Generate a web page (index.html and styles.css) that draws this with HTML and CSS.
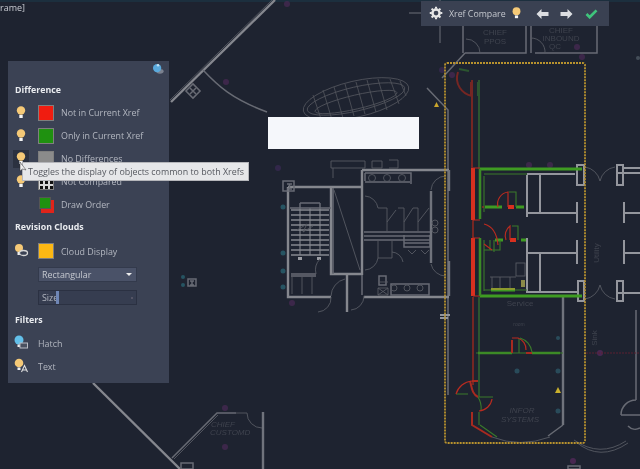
FILE: index.html
```html
<!DOCTYPE html>
<html lang="en">
<head>
<meta charset="utf-8">
<title>Xref Compare</title>
<link rel="stylesheet" href="styles.css">
</head>
<body>
<svg class="defs" width="0" height="0" aria-hidden="true">
  <symbol id="bulb" viewBox="0 0 16 18">
    <circle cx="8" cy="6.500" r="4.200" fill="#f5c977"/>
    <rect x="6.300" y="11" width="3.400" height="3" fill="#f4f4f4"/>
  </symbol>
</svg>
<main class="stage">
  <svg class="drawing" viewBox="0 0 640 469" width="640" height="469" aria-hidden="true">
    <rect x="0" y="0" width="640" height="2" fill="#1c2f3e"/>

    <!-- faint markers -->
    <g class="dots">
      <circle cx="226" cy="82" r="3" fill="#4a2a55"/><circle cx="287" cy="4" r="3" fill="#4a2a55"/>
      <circle cx="278" cy="168" r="3" fill="#3b2a55"/><circle cx="292" cy="303" r="3" fill="#4a2a55"/>
      <circle cx="577" cy="47" r="3" fill="#4a2a55"/><circle cx="582" cy="57" r="3" fill="#4a2a55"/>
      <circle cx="442" cy="70" r="3" fill="#3b2a55"/><circle cx="452" cy="75" r="3" fill="#4a2a55"/>
      <circle cx="529" cy="165" r="3" fill="#4a2a55"/><circle cx="550" cy="165" r="3" fill="#4a2a55"/>
      <circle cx="600" cy="353" r="3" fill="#5a2a60"/><circle cx="573" cy="461" r="3" fill="#5a2a60"/>
      <circle cx="225" cy="447" r="3" fill="#4a2a55"/><circle cx="225" cy="408" r="3" fill="#4a2a55"/>
      <circle cx="517" cy="371" r="2.500" fill="#2f5d6d"/><circle cx="558" cy="371" r="2.500" fill="#2f5d6d"/>
      <circle cx="558" cy="411" r="2.500" fill="#2f5d6d"/><circle cx="558" cy="338" r="2" fill="#2f5d6d"/>
      <circle cx="283" cy="207" r="2.500" fill="#2a6a78"/><circle cx="283" cy="253" r="2.500" fill="#2a6a78"/>
      <circle cx="283" cy="271" r="2.500" fill="#2a6a78"/><circle cx="283" cy="287" r="2.500" fill="#2a6a78"/>
      <circle cx="183" cy="277" r="2" fill="#2a6a78"/><circle cx="183" cy="285" r="2" fill="#2a6a78"/>
      <circle cx="638" cy="58" r="2" fill="#55606a"/>
    </g>

    <!-- top-left curtain wall -->
    <path class="wall-thick wall-bright" d="M171 102 L275 0"/>
    <path class="wall-thin" d="M170 100 L272 0"/>
    <path class="wall" d="M203 70 C218 86 232 99 267 112"/>
    <rect class="wall" x="188" y="86" width="10" height="10" transform="rotate(-45 193 91)"/>
    <path class="wall" d="M190 88 l6 6 M196 88 l-6 6"/>

    <!-- mesh ellipse -->
    <g class="mesh">
      <ellipse cx="356" cy="99" rx="54" ry="18" transform="rotate(-13 356 99)"/>
      <ellipse cx="356" cy="102" rx="42" ry="7" transform="rotate(-13 356 102)"/>
      <ellipse cx="356" cy="99" rx="50" ry="12" transform="rotate(-13 356 99)"/>
      <path d="M313 95 L322 122 M323 90 L332 120 M334 87 L343 118 M345 84 L354 116 M356 82 L365 114 M367 80 L376 112 M378 79 L387 110 M390 79 L399 104 M400 81 L406 96"/>
    </g>

    <!-- bottom-left curtain wall -->
    <path class="wall-thick wall-bright" d="M93 383 L180 469"/>
    <path class="wall" d="M172 458 L217 413 L236 413"/>
    <path class="wall-thin" d="M174 459 L218 415 M236 413 L247 413"/>
    <path class="wall-thin" d="M247 413 A 15 15 0 0 0 262 428"/>
    <path class="wall-thick" d="M263 412 V469"/>
    <rect class="wall" x="181" y="463" width="12" height="6"/>

    <text class="label ital" x="211" y="427">CHIEF</text>
    <text class="label ital" x="210" y="435">CUSTOMD</text>

    <!-- top rooms -->
    <path class="wall" d="M463 26 V53 M465 53 L526 53 V26 M531 26 V53 M535 53 H597 V26"/>
    <path class="wall-thin" d="M466 39 A 14 14 0 0 1 480 53 M531 38 A 14 14 0 0 1 545 53"/>
    <path class="wall" d="M442 78 L465 53 M427 88 L448 110 V395"/>
    <text class="label" x="495" y="35" text-anchor="middle">CHIEF</text>
    <text class="label" x="495" y="44" text-anchor="middle">PPOS</text>
    <text class="label" x="561" y="33" text-anchor="middle">CHIEF</text>
    <text class="label" x="561" y="41" text-anchor="middle">INBOUND</text>
    <text class="label" x="555" y="49" text-anchor="middle">QC</text>
    <path d="M434 107 l2.500 -5 l2.500 5 z" fill="#c9a52c"/>

    <!-- core -->
    <g class="core">
      <path class="wall-thick wall-bright" d="M288 187 V297 H331 M288 187 H362 M331 188 V274 H362 M362 170 V275 M362 170 H449"/>
      <path class="wall" d="M333 188 V274"/>
      <path class="wall-thin" d="M334 190 L360 270"/>
      <rect class="wall" x="283" y="181" width="11" height="10"/>
      <path class="wall" d="M287 184 h5 M289.500 184 v5 M287 189 h5"/>
      <path class="wall-thin" d="M331 161 H365 V168 H331 Z M333 168 V178 M372 161 H382 V168 H372 Z M389 160 H398 V168 H389"/>
      <path class="wall" d="M290 208 H331 M300 203 H320 M300 203 V255 M310 208 V255 M320 203 V255"/>
      <path class="tread" d="M291 210 H329 M291 215 H329 M291 220 H329 M291 225 H329 M291 230 H329 M291 235 H329 M291 240 H329 M291 245 H329 M291 250 H329 M291 255 H329"/>
      <path class="wall-thin" d="M297 230 L307 224 L303 232 L313 226"/>
      <rect class="fill" x="298" y="257" width="4" height="3"/><rect class="fill" x="317" y="257" width="4" height="3"/>
      <path class="wall" d="M291 274 H316 M291 276 H316"/>
      <path class="wall-thin" d="M316 274 A 16 16 0 0 1 320 259"/>
      <path class="wall-thin" d="M292 276 V294 M302 277 V294 M312 277 V294"/>
      <!-- toilets -->
      <path class="wall" d="M365 173 H411 V184 M365 182 H410 M365 173 V181"/>
      <circle class="wall-thin" cx="372" cy="178" r="3.500"/><circle class="wall-thin" cx="387" cy="178" r="3.500"/><circle class="wall-thin" cx="402" cy="178" r="3.500"/>
      <path class="wall" d="M364 232 H430"/>
      <path class="wall" d="M364 236 H430 M364 240 H430"/>
      <path class="wall-thin" d="M365 196 A 14 14 0 0 1 378 208 H387 V232 M387 222 L396 210 M398 208 H404 V232 M404 222 L413 208 H418 V232 M418 222 L429 208"/>
      <path class="wall-thin" d="M378 240 V258 H392 V240 M392 252 A 12 12 0 0 1 403 262 M365 270 A 14 14 0 0 0 378 258"/>
      <path class="wall" d="M404 235 V247 H430 V235 M404 243 H430"/>
      <path class="wall-thin" d="M408 250 l4 4 l4 -4 M421 250 l4 4 l4 -4"/>
      <path class="wall-thick" d="M431 191 V263"/>
      <path class="wall-thick" d="M449 170 V191 M449 261 V296"/>
      <path class="wall-thin" d="M431 190 A 15 15 0 0 1 446 176 M431 264 A 15 15 0 0 0 446 276"/>
      <circle class="wall-thin" cx="435" cy="223" r="3"/><circle class="wall-thin" cx="435" cy="230" r="3"/>
      <path class="wall" d="M362 275 V295"/>
      <path class="wall-thick wall-bright" d="M347 275 V312 M364 297 H449"/>
      <rect class="wall" x="379" y="276" width="7" height="9"/>
      <path class="wall-thin" d="M378 282 H388 M378 288 H388 V295 H378 Z M378 288 L388 295 M388 288 L378 295"/>
      <path class="wall" d="M391 284 H429 V295 H391 Z"/>
      <circle class="wall-thin" cx="394" cy="288" r="3"/><circle class="wall-thin" cx="407" cy="288" r="3"/><circle class="wall-thin" cx="420" cy="288" r="3"/>
      <path class="wall-thin" d="M345 279 A 18 18 0 0 0 331 296 M351 310 A 14 14 0 0 0 364 296 M331 297 A 14 14 0 0 1 318 312"/>
    </g>

    <!-- dim xref lines -->
    <path class="red-dim" d="M472 80 V168 M473 220 V238 M473 297 V385"/>
    <path class="green-dim" d="M479 80 V169 M479 297 V397"/>
    <path class="red-dim" d="M458 72 C454 84 462 94 472 96 M471 82 V96"/>
    <path class="green-dim" d="M459 69 L469 71 M478 82 V96"/>

    <!-- right wing -->
    <path class="wall-white" d="M527 238 V293 M527 253 H577 M577 240 V264 M540 253 V292 M527 292 H577"/>
    <path class="wall-white" d="M527 175 V217 M527 174 H575 M540 174 V214 M527 213 H577 M577 202 V223"/>
    <path class="wall-white" d="M577 165 H584 V185 H577 Z M578 281 H584 V301 H578 Z"/>
    <path class="wall-thin" d="M585 167 A 18 18 0 0 1 600 181 A 18 18 0 0 1 615 167 M585 299 A 18 18 0 0 0 600 285 A 18 18 0 0 0 615 299"/>

    <path class="wall-white" d="M623 165 H617 V185 H623 Z M623 281 H617 V301 H623 Z"/>
    <path class="wall-white" d="M622 168 H640 M618 173 H640 M624 202 V223 M624 213 H640 M624 240 V264 M624 253 H640 M618 293 H640"/>

    <path class="wall-thick" d="M563 297 V425"/>
    <!-- green / red revisions -->
    <path class="red" d="M473 168 V220 M473 238 V296"/>
    <path class="red-thin" d="M473 168 H480 M473 220 H480 M473 238 H480 M473 296 H480"/>
    <path class="green" d="M480 169 H582 M480 296 H582"/>
    <path class="green-mid" d="M480 169 V219 M480 238 V296"/>
    <path class="green-thin" d="M484 176 V212 M484 240 V291 M484 174 H527 M484 290 H527"/>
    <path class="green" d="M485 207 H502 M516 207 H524 M495 240 H503 M521 240 H526 M491 290 H515"/>
    <path class="red" d="M508 207 H514 M510 240 H516"/>
    <path class="red-thin" d="M498 207 A 12 12 0 0 1 508 192 V207 M506 240 A 12 12 0 0 1 510 226 V240 M484 224 C492 226 497 234 498 245"/>
    <path class="green-thin" d="M516 207 V192 H509 M518 240 V226 H512 M490 240 V250 H500 V240 M484 250 H500 M494 252 V240"/>
    <path class="red-thin" d="M484 244 L492 250 M482 207 H484"/>
    <path class="wall-thin" d="M492 277 V290 M500 277 V290 M510 277 V290 M490 277 H516"/>
    <rect x="491" y="288" width="24" height="2" fill="#8c9a2e"/>
    <rect x="521" y="280" width="4" height="7" fill="#8a8a48"/>
    <rect class="wall-thin" x="516" y="263" width="9" height="13"/>

    <!-- lower room -->
    <path class="green-thin" d="M476 353 H563"/>
    <path class="green-mid" d="M478 353 H512 M532 353 H560"/>
    <path class="red-mid" d="M512 340 V353 M526 353 H532"/>
    <path class="red-thin" d="M512 338 H518 A 12 12 0 0 1 526 350"/>
    <path class="green-thin" d="M519 339 V353 M520 338 A 17 17 0 0 1 532 352"/>
    <path class="green-thin" d="M456 394 H468 M479 397 H493 M478 397 A 20 20 0 0 1 481 410 M479 412 V425"/>
    <path class="red-mid" d="M470 381 C472 388 472 394 478 397 M472 381 H478"/>
    <path class="red-thin" d="M456 394 A 18 18 0 0 1 472 381 M479 411 A 14 14 0 0 0 492 399"/>
    <path class="red-mid" d="M472 412 V425 L492 437"/>
    <path class="green-thin" d="M480 425 L497 437"/>
    <path class="wall-thin" d="M492 437 Q 520 448 550 437"/>
    <path class="wall" d="M548 436 L563 425"/>
    <path class="wall-thin" d="M574 440 Q 600 458 626 441"/>
    <path class="wall-thin" d="M576 442 Q 600 462 628 443"/>
    <path class="wall" d="M636 310 V400 M621 415 A 15 15 0 0 1 636 400 M621 415 H640 M628 426 A 10 10 0 0 0 640 428"/>
    <path class="wall-white" d="M440 315 H450 M440 318 H448"/>
    <rect class="wall" x="568" y="466" width="12" height="3"/>
    <path d="M555 393 l3 -6 l3 6 z" fill="#c9b02c"/>
    <path class="xline" d="M586 353 H640"/>
    <text class="label ital" x="522" y="413" text-anchor="middle">INFOR</text>
    <text class="label ital" x="520" y="422" text-anchor="middle">SYSTEMS</text>
    <text class="label" x="520" y="306" text-anchor="middle">Service</text>
    <text class="label" transform="rotate(-90 599 253)" x="599" y="253" text-anchor="middle">Utility</text>
    <text class="label" transform="rotate(-90 597 338)" x="597" y="338" text-anchor="middle">Sink</text>
    <text class="label-sm" x="519" y="326" text-anchor="middle">room</text>

    <!-- small column by panel -->
    <path class="wall" d="M188 279 H196 V286 H188 Z M190 281 h4 M192 281 v4 M190 285 h4"/>

    <!-- revision cloud -->
    <rect class="cloud" x="445" y="63" width="140" height="380" rx="2"/>

    <!-- crosshair -->
    <path class="cross" d="M409 13 H441 M440 0 V43"/>
  </svg>

  <p class="caption">rame]</p>
  <div class="blank"></div>

  <section class="toolbar">
    <svg class="gear" viewBox="0 0 16 16" width="15" height="15" aria-hidden="true">
      <circle cx="7.500" cy="7.500" r="3.800" fill="none" stroke="#e6e6e6" stroke-width="2.600"/>
      <path d="M7.500 .8 V3 M7.500 12 V14.200 M.8 7.500 H3 M12 7.500 H14.200 M2.800 2.800 L4.300 4.300 M10.700 10.700 L12.200 12.200 M12.200 2.800 L10.700 4.300 M4.300 10.700 L2.800 12.200" stroke="#e6e6e6" stroke-width="2.200"/>
    </svg>
    <span class="toolbar-title">Xref Compare</span>
    <svg class="tool-bulb" aria-hidden="true"><use href="#bulb"/></svg>
    <svg class="tool-arrow" viewBox="0 0 12 10" width="13" height="10" aria-hidden="true"><path d="M0 5 L5 0 V3 H12 V7 H5 V10 Z" fill="#dcdee2"/></svg>
    <svg class="tool-arrow" viewBox="0 0 12 10" width="13" height="10" aria-hidden="true"><path d="M12 5 L7 0 V3 H0 V7 H7 V10 Z" fill="#dcdee2"/></svg>
    <svg class="tool-check" viewBox="0 0 14 11" width="13" height="10" aria-hidden="true"><path d="M1.500 5.500 L5 9 L12.500 1.500" fill="none" stroke="#3fc47c" stroke-width="3"/></svg>
  </section>

  <aside class="panel">
    <svg class="panel-pin" viewBox="0 0 14 14" width="13" height="13" aria-hidden="true">
      <ellipse cx="8.500" cy="9" rx="4" ry="2.500" fill="#7b8290"/>
      <circle cx="5.500" cy="5.500" r="4.500" fill="#5aa9dc"/>
      <circle cx="6.500" cy="2.500" r="1.300" fill="#bfe0f5"/>
    </svg>
    <h2 class="heading heading-first">Difference</h2>

    <div class="row">
      <svg class="row-icon" aria-hidden="true"><use href="#bulb"/></svg>
      <span class="swatch swatch-red"></span><span class="row-label">Not in Current Xref</span>
    </div>
    <div class="row">
      <svg class="row-icon" aria-hidden="true"><use href="#bulb"/></svg>
      <span class="swatch swatch-green"></span><span class="row-label">Only in Current Xref</span>
    </div>
    <div class="row">
      <span class="hover-cell"><svg class="row-icon" aria-hidden="true"><use href="#bulb"/></svg></span>
      <span class="swatch swatch-grey"></span><span class="row-label">No Differences</span>
    </div>
    <div class="row">
      <svg class="row-icon" aria-hidden="true"><use href="#bulb"/></svg>
      <span class="swatch swatch-dots"></span><span class="row-label">Not Compared</span>
    </div>
    <div class="row">
      <span class="row-icon"></span>
      <span class="swatch swatch-order"><i class="order-back"></i><i class="order-front"></i></span><span class="row-label">Draw Order</span>
    </div>

    <h2 class="heading">Revision Clouds</h2>
    <div class="row">
      <svg class="row-icon" viewBox="0 0 16 18" aria-hidden="true">
        <circle cx="6" cy="6" r="4" fill="#f5c977"/><rect x="4.500" y="10" width="3" height="3" fill="#eee"/>
        <ellipse cx="10.500" cy="11" rx="4" ry="2.500" fill="#3b4254" stroke="#d8d8d8" stroke-width="1.300"/>
      </svg>
      <span class="swatch swatch-amber"></span><span class="row-label">Cloud Display</span>
    </div>
    <div class="row row-field">
      <div class="select"><span>Rectangular</span><i class="caret"></i></div>
    </div>
    <div class="row row-field">
      <div class="slider"><span>Size</span><i class="handle"></i><i class="chev"></i></div>
    </div>

    <h2 class="heading">Filters</h2>
    <div class="row">
      <svg class="row-icon" viewBox="0 0 16 18" aria-hidden="true">
        <circle cx="6" cy="6" r="4.500" fill="#63c0ea"/><rect x="4.500" y="10.500" width="3" height="2.500" fill="#eee"/>
        <rect x="7" y="9" width="7.500" height="5" fill="#4a5160" stroke="#b9bcc4"/>
      </svg>
      <span class="row-label row-label-short">Hatch</span>
    </div>
    <div class="row">
      <svg class="row-icon" viewBox="0 0 16 18" aria-hidden="true">
        <circle cx="6" cy="6" r="4.300" fill="#f5c977"/><rect x="4.500" y="10.500" width="3" height="2.500" fill="#eee"/>
        <path d="M8.500 15 L11.500 8.500 L14.500 15 M9.800 13 H13.200" fill="none" stroke="#e0e0e0" stroke-width="1.100"/>
      </svg>
      <span class="row-label row-label-short">Text</span>
    </div>
  </aside>

  <div class="tooltip">Toggles the display of objects common to both Xrefs</div>
  <svg class="cursor" viewBox="0 0 10 12" width="10" height="12" aria-hidden="true"><path d="M1 0 L1 9 L3.500 7 L7 8 Z" fill="#f0f0f0" stroke="#333" stroke-width=".5"/></svg>
</main>
</body>
</html>
```

FILE: styles.css
```css
* { box-sizing: border-box; }
html, body { margin: 0; padding: 0; background: #1e2330; }
body { width: 640px; height: 469px; overflow: hidden; font-family: "Open Sans", "Noto Sans", sans-serif; }

.defs { position: absolute; }
.stage { position: relative; width: 640px; height: 469px; overflow: hidden; background: #1e2330; filter: blur(0.5px); }
.drawing { position: absolute; left: 0; top: 0; display: block; }

.dots { opacity: .7; }
.wall-thick { stroke: #70737c; stroke-width: 2.400; fill: none; }
.wall-bright { stroke: #85878e; }
.wall { stroke: #686b74; stroke-width: 1.500; fill: none; }
.wall-thin { stroke: #575a63; stroke-width: .9; fill: none; }
.wall-white { stroke: #94969d; stroke-width: 2; fill: none; }
.tread { stroke: #85888f; stroke-width: 1.300; fill: none; }
.fill { fill: #9a9ca3; }
.mesh ellipse, .mesh path { stroke: #53555d; stroke-width: .8; fill: none; }
.red { stroke: #d8301f; stroke-width: 4; fill: none; }
.red-mid { stroke: #a82a20; stroke-width: 2; fill: none; }
.red-thin { stroke: #b92b20; stroke-width: 1.200; fill: none; }
.red-dim { stroke: #752623; stroke-width: 2; fill: none; }
.green { stroke: #3f9b22; stroke-width: 3; fill: none; }
.green-mid { stroke: #3c8a26; stroke-width: 2.500; fill: none; }
.green-thin { stroke: #3a7a2b; stroke-width: 1.100; fill: none; }
.green-dim { stroke: #2c552f; stroke-width: 2; fill: none; }
.cloud { stroke: #b8922e; stroke-width: 1.800; stroke-dasharray: 2 1; fill: none; }
.cross { stroke: #6d7079; stroke-width: 1; fill: none; }
.xline { stroke: #5a2030; stroke-width: 1; stroke-dasharray: 2 1; fill: none; }
.label { font-family: "Liberation Sans", sans-serif; font-size: 8px; fill: #3f434e; }
.label-sm { font-family: "Liberation Sans", sans-serif; font-size: 5px; fill: #3f434e; }
.ital { font-style: italic; }

.caption { position: absolute; left: 0; top: 2px; margin: 0; font-size: 9px; line-height: 12px; color: #c8cbd2; }
.blank { position: absolute; left: 268px; top: 117px; width: 151px; height: 32px; background: #f5f7fb; }

.toolbar { position: absolute; left: 421px; top: 1px; width: 188px; height: 25px; background: #3a4152; display: flex; align-items: center; padding-left: 8px; }
.gear { flex: none; }
.toolbar-title { margin-left: 5px; width: 57px; font-size: 8.800px; color: #c4c7ce; white-space: nowrap; }
.tool-bulb { margin-left: 3px; width: 15px; height: 17px; }
.tool-arrow { margin-left: 12px; }
.tool-arrow + .tool-arrow { margin-left: 11px; }
.tool-check { margin-left: 12px; }

.panel { position: absolute; left: 8px; top: 61px; width: 161px; height: 322px; background: #3b4254; padding: 18px 0 0 5px; display: flex; flex-direction: column; }
.panel-pin { position: absolute; left: 144px; top: 2px; }
.heading { margin: 0 0 0 2px; height: 23px; line-height: 23px; font-size: 8.800px; font-weight: 700; color: #e9ebef; flex: none; }
.heading-first { height: 22px; }
.row { height: 23.100px; display: flex; align-items: center; flex: none; }
.row-icon { width: 16px; height: 18px; flex: none; display: block; }
.hover-cell { width: 16px; height: 18px; flex: none; background: #2b3140; display: block; }
.swatch { width: 16px; height: 16px; margin-left: 9px; flex: none; border: 1px solid #7f7f7f; position: relative; display: block; }
.swatch-red { background: #f01c10; }
.swatch-green { background: #1f9110; }
.swatch-grey { background: #8b8b8b; }
.swatch-dots { background: radial-gradient(circle, #111 1.500px, #d8d8d8 2px) 0 0 / 5px 5px; }
.swatch-amber { background: #fdb813; }
.swatch-order { border: 0; }
.order-back { position: absolute; left: 3px; top: 3px; width: 13px; height: 13px; background: #e0241a; }
.order-front { position: absolute; left: 1px; top: 0; width: 12px; height: 12px; background: #1f9110; border: 1px solid #555; }
.row-label { margin-left: 7px; font-size: 8.900px; color: #b3b7c0; white-space: nowrap; }
.row-label-short { margin-left: 9px; }
.row-field { padding-left: 25px; }
.select { width: 99px; height: 15px; background: #4a5268; border: 1px solid #333a4c; display: flex; align-items: center; justify-content: space-between; padding: 0 4px 0 3px; font-size: 8.900px; color: #c6c9d0; }
.caret { width: 0; height: 0; border-left: 3px solid transparent; border-right: 3px solid transparent; border-top: 3px solid #eee; }
.slider { width: 99px; height: 15px; background: #363d50; border: 1px solid #2b3142; position: relative; padding-left: 3px; font-size: 8.900px; line-height: 13px; color: #b3b7c0; }
.handle { position: absolute; left: 17px; top: 0; width: 3px; height: 13px; background: #6f86b5; }
.chev { position: absolute; right: 3px; top: 6px; width: 2px; height: 2px; background: #556; }

.tooltip { position: absolute; left: 22px; top: 162px; width: 227px; height: 19px; background: #e6e7e9; border: 1px solid #b5b6ba; padding-left: 5px; font-size: 8.900px; line-height: 17px; color: #55585f; white-space: nowrap; }
.cursor { position: absolute; left: 19px; top: 162px; }
```
